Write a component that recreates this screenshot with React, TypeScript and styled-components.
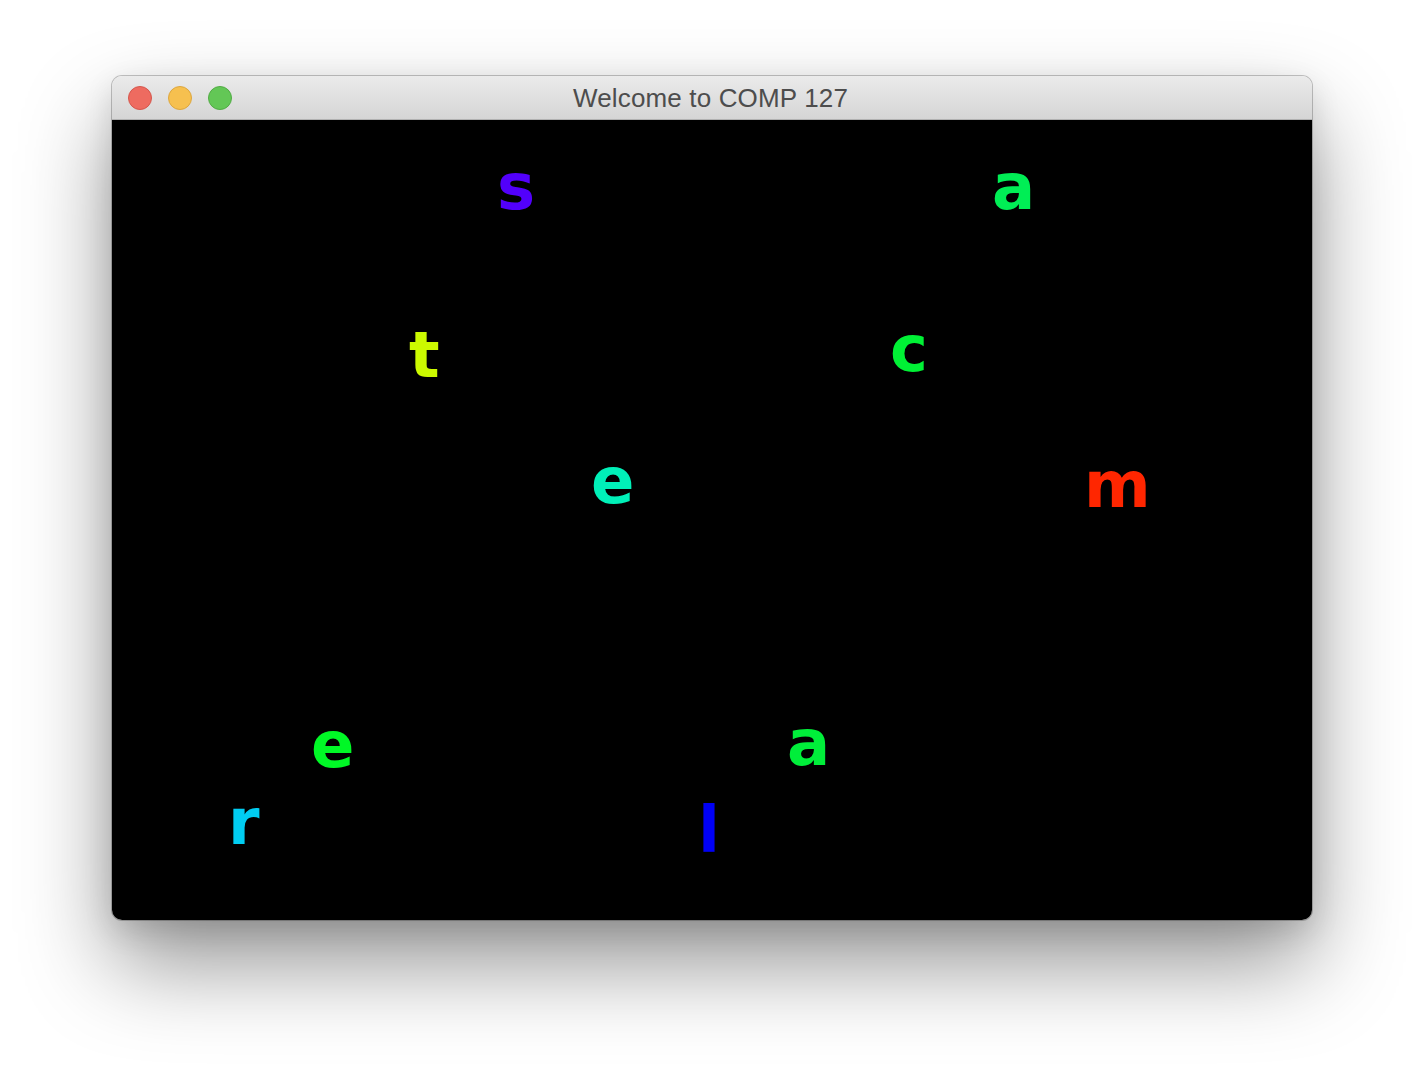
import React from "react";
import styled, { createGlobalStyle } from "styled-components";

const GlobalStyle = createGlobalStyle`
  html, body {
    margin: 0;
    padding: 0;
    background: #ffffff;
  }
  #root {
    min-height: 1068px;
  }
`;

const Desktop = styled.div`
  display: flex;
  justify-content: center;
  align-items: flex-start;
  padding-top: 76px;
  height: 1068px;
  box-sizing: border-box;
  background: #ffffff;
`;

const Window = styled.div`
  width: 1200px;
  display: flex;
  flex-direction: column;
  border-radius: 10px;
  overflow: hidden;
  box-shadow: 0 0 0 1px rgba(0, 0, 0, 0.22), 0 44px 90px rgba(0, 0, 0, 0.42),
    0 10px 30px rgba(0, 0, 0, 0.12);
`;

const TitleBar = styled.div`
  height: 43px;
  display: grid;
  grid-template-columns: 1fr auto 1fr;
  align-items: center;
  padding: 0 16px;
  background: linear-gradient(#ebebeb, #d5d5d5);
  border-bottom: 1px solid #b1b1b1;
`;

const Lights = styled.div`
  display: flex;
  gap: 16px;
`;

const Light = styled.span<{ $fill: string; $edge: string }>`
  width: 22px;
  height: 22px;
  border-radius: 50%;
  background: ${(p) => p.$fill};
  border: 1px solid ${(p) => p.$edge};
`;

const Title = styled.div`
  font-family: "Liberation Sans", Arial, sans-serif;
  font-size: 26px;
  color: #4d4d4d;
  letter-spacing: 0.15px;
  padding-top: 2px;
  margin-left: -3px;
`;

const Canvas = styled.div`
  position: relative;
  height: 800px;
  background: #000000;
`;

const Glyph = styled.span<{ $color: string }>`
  position: absolute;
  font-family: "DejaVu Sans", sans-serif;
  font-weight: bold;
  font-size: 64px;
  line-height: 64px;
  color: ${(p) => p.$color};
`;

const letters = [
  { ch: "s", x: 385, y: 35, c: "#5200fb" },
  { ch: "a", x: 880, y: 35, c: "#00ee55" },
  { ch: "t", x: 297, y: 203, c: "#ccfa00" },
  { ch: "c", x: 778, y: 197, c: "#00f135" },
  { ch: "e", x: 479, y: 329, c: "#00f0b8" },
  { ch: "m", x: 972, y: 333, c: "#ff2600" },
  { ch: "e", x: 199, y: 593, c: "#00f826" },
  { ch: "a", x: 675, y: 591, c: "#00ee3a" },
  { ch: "r", x: 116, y: 670, c: "#00cdf2" },
  { ch: "l", x: 586, y: 678, c: "#0000f5" },
];

export default function App() {
  return (
    <>
      <GlobalStyle />
      <Desktop>
        <Window>
          <TitleBar>
            <Lights>
              <Light $fill="#ee6b60" $edge="#d4574d" />
              <Light $fill="#f6c04f" $edge="#dca63f" />
              <Light $fill="#63c756" $edge="#52ab45" />
            </Lights>
            <Title>Welcome to COMP 127</Title>
            <span />
          </TitleBar>
          <Canvas>
            {letters.map((l, i) => (
              <Glyph key={i} $color={l.c} style={{ left: l.x, top: l.y }}>
                {l.ch}
              </Glyph>
            ))}
          </Canvas>
        </Window>
      </Desktop>
    </>
  );
}
